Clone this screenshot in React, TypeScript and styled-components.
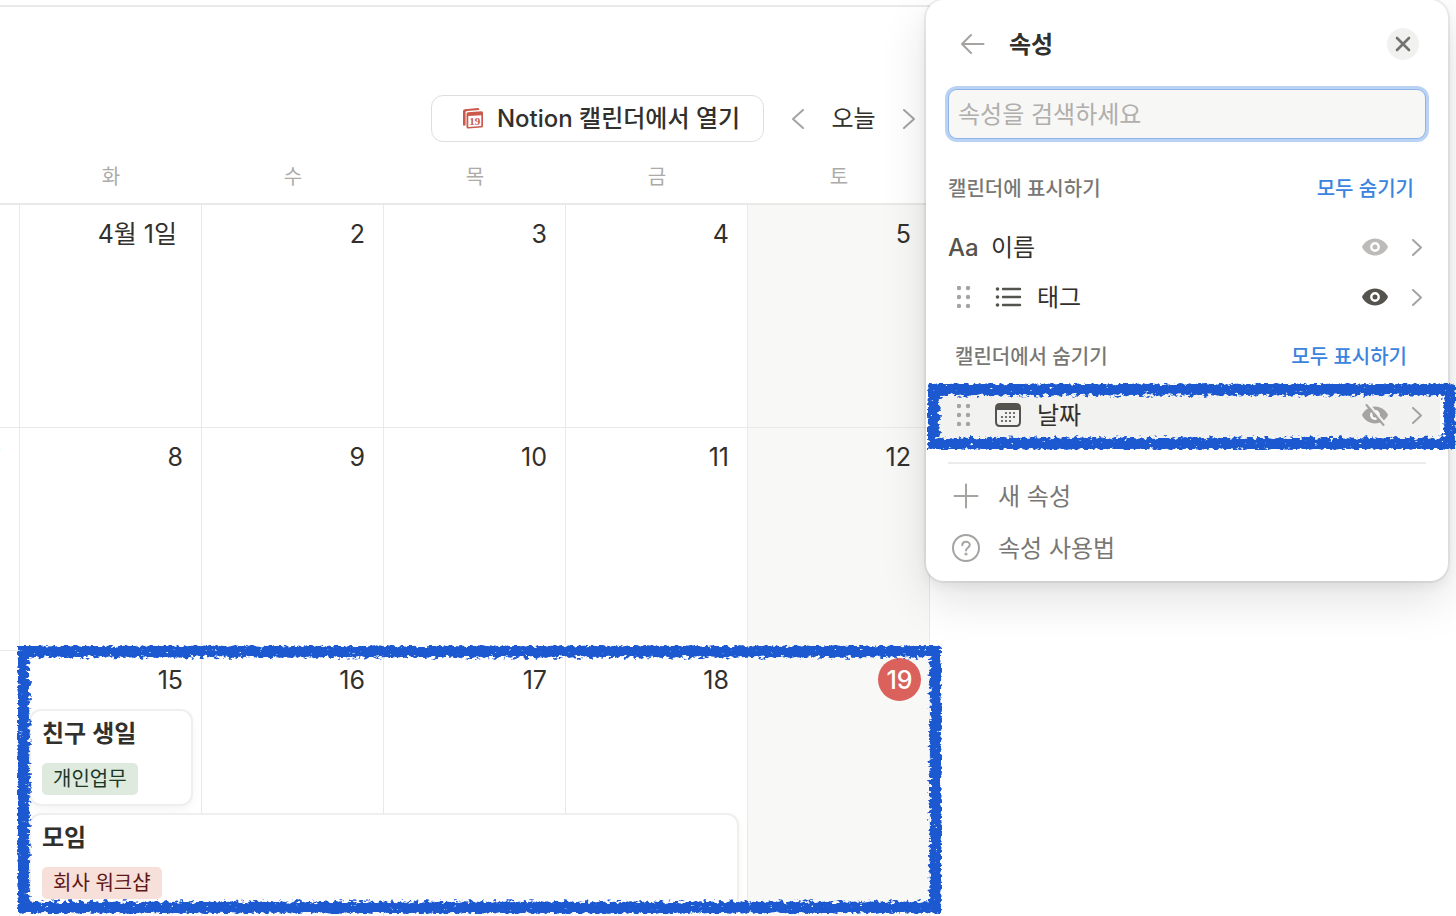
import React from "react";
import styled, { createGlobalStyle, css } from "styled-components";

const Global = createGlobalStyle`
  *, *::before, *::after { box-sizing: border-box; }
  body { margin: 0; background: #fff; color: #32302c; overflow: hidden; }
  body, button, input { font-family: Inter, "Noto Sans CJK KR", sans-serif; }
  button { border: 0; padding: 0; margin: 0; background: none; color: inherit; cursor: pointer; }
`;

const Page = styled.div`
  position: relative;
  height: 100vh;
  overflow: hidden;
  padding-top: 5px;
`;

const Calendar = styled.main`
  margin-right: 526px;
  border-top: 2px solid #e9e9e7;
  padding-top: 88px;
`;

const Toolbar = styled.div`
  display: flex;
  justify-content: flex-end;
  align-items: center;
  height: 47px;
  padding-right: 11px;
`;

const OpenButton = styled.button`
  display: flex;
  align-items: center;
  justify-content: center;
  gap: 14px;
  width: 333px;
  height: 47px;
  margin-right: 24px;
  padding-left: 8px;
  border: 1px solid #dededc;
  border-radius: 12px;
  font-size: 24px;
  font-weight: 500;
  white-space: nowrap;
`;

/* Hangul glyphs sit low in their line box; the bottom padding centres them. */
const Label = styled.span`
  padding-bottom: 4px;
`;

const NavButton = styled.button`
  display: flex;
  width: 20px;
  justify-content: center;
`;

const TodayButton = styled.button`
  width: 91px;
  padding-bottom: 4px;
  font-size: 24px;
`;

const columns = css`
  display: grid;
  grid-template-columns: 20px repeat(5, minmax(0, 1fr));
`;

const WeekdayRow = styled.div`
  ${columns}
  height: 63px;
  border-bottom: 2px solid #e9e9e7;
`;

const Weekday = styled.div`
  padding-top: 21px;
  font-size: 20px;
  line-height: 28px;
  text-align: center;
  color: #acaba9;
`;

const Week = styled.div<{ $last?: boolean }>`
  position: relative;
  ${columns}
  height: ${(p) => (p.$last ? "270px" : "223px")};
`;

const Day = styled.div<{ $weekend?: boolean }>`
  display: flex;
  justify-content: flex-end;
  align-items: flex-start;
  padding: 7px 8px 0 0;
  overflow: hidden;
  border-right: 1px solid #e9e9e7;
  border-bottom: 1px solid #e9e9e7;
  background: ${(p) => (p.$weekend ? "#f8f8f7" : "#fff")};
`;

const DayNumber = styled.span<{ $today?: boolean; $wide?: boolean }>`
  display: flex;
  align-items: center;
  justify-content: flex-end;
  height: 43px;
  padding: ${(p) => (p.$wide ? "0 16px 3px 0" : "1px 10px 0 0")};
  font-size: 25px;
  white-space: nowrap;
  ${(p) =>
    p.$today &&
    css`
      width: 43px;
      padding: 1px 0 0;
      justify-content: center;
      border-radius: 50%;
      background: #db615c;
      color: #fff;
      font-weight: 500;
    `}
`;

const Events = styled.div`
  position: absolute;
  inset: 60px 0 auto 0;
  ${columns}
  row-gap: 11px;
`;

const EventCard = styled.article<{ $span: number }>`
  grid-column: 2 / span ${(p) => p.$span};
  height: 93px;
  margin: 0 11px;
  padding: 5px 11px;
  border-radius: 10px;
  background: #fff;
  box-shadow: 0 0 0 2px #efefee, 0 4px 12px rgba(15, 15, 15, 0.06);
`;

const EventTitle = styled.h3`
  margin: 0 0 11px;
  font-size: 24px;
  font-weight: 600;
  line-height: 36px;
`;

const Tag = styled.span<{ $tone: "green" | "red" }>`
  display: block;
  width: fit-content;
  padding: 0 11px;
  border-radius: 5px;
  font-size: 20px;
  line-height: 32px;
  background: ${(p) => (p.$tone === "green" ? "#deeade" : "#f7dfda")};
  color: ${(p) => (p.$tone === "green" ? "#1c3829" : "#5d1715")};
`;

const Panel = styled.aside`
  position: absolute;
  top: 0;
  right: 8px;
  width: 522px;
  padding: 22px 0 7px;
  border-radius: 18px;
  background: #fff;
  box-shadow: 0 0 0 2px rgba(15, 15, 15, 0.06), 0 6px 12px rgba(15, 15, 15, 0.06),
    0 18px 48px rgba(15, 15, 15, 0.12);
`;

const PanelHeader = styled.header`
  display: flex;
  align-items: center;
  height: 44px;
  padding: 0 29px 0 34px;
`;

const BackButton = styled.button`
  display: flex;
`;

const PanelTitle = styled.h2`
  flex: 1;
  margin: 0 0 0 24px;
  padding-bottom: 4px;
  font-size: 24px;
  font-weight: 600;
`;

const CloseButton = styled.button`
  display: grid;
  place-items: center;
  width: 32px;
  height: 32px;
  border-radius: 50%;
  background: #f1f1f0;
`;

const SearchInput = styled.input`
  display: block;
  width: calc(100% - 46px);
  height: 48px;
  margin: 24px 23px 0;
  padding: 0 9px;
  border: 0;
  border-radius: 8px;
  outline: 0;
  background: #f7f7f5;
  box-shadow: 0 0 0 1px #8fb5e8, 0 0 0 4px #bad3f4;
  font-size: 24px;
  &::placeholder { color: #b0afad; opacity: 1; }
`;

const SectionHead = styled.div<{ $inset?: boolean }>`
  display: flex;
  justify-content: space-between;
  align-items: center;
  height: 36px;
  padding: ${(p) => (p.$inset ? "0 41px 0 29px" : "0 34px 0 22px")};
  margin-top: ${(p) => (p.$inset ? "15px" : "31px")};
  font-size: 20px;
  font-weight: 500;
  color: #787774;
`;

const LinkButton = styled.button`
  font-size: 20px;
  font-weight: 500;
  color: #3a84de;
`;

const Properties = styled.ul`
  list-style: none;
  margin: 0;
  padding: 17px 0 0;
`;

const PropertyRow = styled.li<{ $active?: boolean }>`
  position: relative;
  display: flex;
  align-items: center;
  height: 50px;
  margin: 0 8px 0 8px;
  padding: 0 18px 0 14px;
  border-radius: 8px;
  background: ${(p) => (p.$active ? "#f2f2f1" : "transparent")};
`;

const Grip = styled.button`
  display: flex;
  width: 32px;
  margin-right: 15px;
  padding-left: 9px;
`;

const Glyph = styled.span<{ $text?: boolean }>`
  display: flex;
  width: ${(p) => (p.$text ? "30px" : "28px")};
  margin-right: ${(p) => (p.$text ? "13px" : "14px")};
  font-size: 24px;
  font-weight: 500;
  color: #55534e;
`;

const PropertyName = styled.span`
  flex: 1;
  padding-bottom: 4px;
  font-size: 24px;
`;

const IconButton = styled.button`
  display: flex;
  margin-left: 23px;
`;

const Divider = styled.hr`
  height: 2px;
  margin: 22px 22px 6px;
  border: 0;
  background: #ebebea;
`;

const Action = styled.button`
  display: flex;
  align-items: center;
  gap: 18px;
  width: 100%;
  height: 52px;
  padding-left: 26px;
  font-size: 24px;
  color: #787774;
`;

const Marker = styled.div<{ $bleed: string }>`
  position: absolute;
  inset: ${(p) => p.$bleed};
  pointer-events: none;
  z-index: 2;
`;

const MarkerDrawing = styled.svg`
  display: block;
  width: 100%;
  height: 100%;
  overflow: visible;
`;

const OuterLine = styled.rect`
  x: -1px;
  y: -1px;
  width: calc(100% + 2px);
  height: calc(100% + 2px);
  fill: none;
  stroke: #1c59d1;
  stroke-width: 10px;
`;

const InnerFray = styled.rect`
  x: 5px;
  y: 5px;
  width: calc(100% - 10px);
  height: calc(100% - 10px);
  fill: none;
  stroke: rgba(28, 89, 209, 0.4);
  stroke-width: 3px;
`;

/* Crayon-like outline: a soft stroke broken up by noise, cut at a threshold and kept near the line. */
function Crayon({ id, bleed, seed }: { id: string; bleed: string; seed: number }) {
  return (
    <Marker $bleed={bleed} aria-hidden="true">
      <MarkerDrawing>
        <filter
          id={id}
          x="-10"
          y="-10"
          width="110%"
          height="140%"
          filterUnits="userSpaceOnUse"
          primitiveUnits="userSpaceOnUse"
          colorInterpolationFilters="sRGB"
        >
          <feMorphology in="SourceAlpha" operator="dilate" radius="1" result="near" />
          <feComponentTransfer in="near" result="nearSolid">
            <feFuncA type="linear" slope="4" />
          </feComponentTransfer>
          <feGaussianBlur in="SourceAlpha" stdDeviation="1.2" result="soft" />
          <feTurbulence type="fractalNoise" baseFrequency="0.2 0.32" numOctaves="3" seed={seed} />
          <feColorMatrix values="0 0 0 0 0  0 0 0 0 0  0 0 0 0 0  1 0 0 0 0" result="noise" />
          <feComposite in="soft" in2="noise" operator="arithmetic" k2="1" k3="1.9" k4="-0.9" result="mixed" />
          <feComponentTransfer in="mixed" result="cut">
            <feFuncA type="linear" slope="5" intercept="-1.9" />
          </feComponentTransfer>
          <feComposite in="cut" in2="nearSolid" operator="in" />
          <feColorMatrix values="0 0 0 0 0.11  0 0 0 0 0.35  0 0 0 0 0.82  0 0 0 1 0" />
        </filter>
        <g filter={`url(#${id})`}>
          <OuterLine />
          <InnerFray />
        </g>
      </MarkerDrawing>
    </Marker>
  );
}

const Chevron = ({ left }: { left?: boolean }) => (
  <svg width="12" height="20" viewBox="0 0 12 20" fill="none" stroke="#a5a4a1" strokeWidth="2" strokeLinecap="round" strokeLinejoin="round">
    <path d={left ? "M11 1 1 10l10 9" : "M1 1l10 9-10 9"} />
  </svg>
);

const RowChevron = () => (
  <svg width="10" height="17" viewBox="0 0 10 17" fill="none" stroke="#a5a4a1" strokeWidth="2" strokeLinecap="round" strokeLinejoin="round">
    <path d="M1 1l8 7.5L1 16" />
  </svg>
);

const CalendarLogo = () => (
  <svg width="20" height="21" viewBox="0 0 20 21">
    <path d="M0 17.500V3.300Q0 1.400 1.800 1.200L15 0Q16.300 0 16.300 1.500V2L4 3Q2.600 3.200 2.600 4.600V17.500Z" fill="#cb5a4c" />
    <path d="M5 4.300 18.500 3.300Q20 3.200 20 4.800V18Q20 19.500 18.500 19.600L5.200 20.500Q3.500 20.600 3.500 19V6Q3.500 4.400 5 4.300Z" fill="#cb5a4c" />
    <path d="M5.300 8 18.300 7.200V18L5.300 18.900Z" fill="#fff" />
    <text x="11.800" y="17" textAnchor="middle" fontSize="11" fontWeight="700" fontFamily="Liberation Serif, serif" fill="#cb5a4c">19</text>
  </svg>
);

const Eye = ({ color, off }: { color: string; off?: boolean }) => (
  <svg width="28" height="22" viewBox="0 0 28 22">
    <path d="M1 11C3 6.500 8 2.500 14 2.500S25 6.500 27 11C25 15.500 20 19.500 14 19.500S3 15.500 1 11Z" fill={color} />
    <circle cx="14" cy="11" r="3.700" fill={color} stroke="#fff" strokeWidth="2.400" />
    {off && (
      <>
        <path d="M7.500 0 24.500 20" stroke="#f2f2f1" strokeWidth="2.200" />
        <path d="M5.500 1 22.500 21" stroke={color} strokeWidth="2" strokeLinecap="round" />
      </>
    )}
  </svg>
);

const Dots = () => (
  <svg width="14" height="22" viewBox="0 0 14 22" fill="#a5a4a1">
    {[2, 11].map((x) => [2, 11, 20].map((y) => <circle key={`${x}-${y}`} cx={x} cy={y} r="2.200" />))}
  </svg>
);

const ListIcon = () => (
  <svg width="27" height="20" viewBox="0 0 27 20" stroke="#55534e" strokeWidth="2.400" strokeLinecap="round">
    {[2, 10, 18].map((y) => (
      <g key={y}>
        <path d={`M8 ${y}H25`} />
        <circle cx="2.500" cy={y} r="1.800" fill="#55534e" stroke="none" />
      </g>
    ))}
  </svg>
);

const DateIcon = () => (
  <svg width="26" height="24" viewBox="0 0 26 24" fill="#55534e">
    <path fillRule="evenodd" d="M5 0H21Q26 0 26 5V19Q26 24 21 24H5Q0 24 0 19V5Q0 0 5 0ZM2 7V19Q2 22 5 22H21Q24 22 24 19V7Z" />
    {[[11, 10], [15, 10], [19, 10], [7, 14], [11, 14], [15, 14], [19, 14], [7, 18], [11, 18], [15, 18]].map(([x, y]) => (
      <circle key={`${x}-${y}`} cx={x} cy={y} r="1.100" />
    ))}
  </svg>
);

const weeks = [
  ["", "4월 1일", "2", "3", "4", "5"],
  ["7", "8", "9", "10", "11", "12"],
  ["14", "15", "16", "17", "18", "19"],
];

export default function App() {
  return (
    <>
      <Global />
      <Page>
        <Calendar>
          <Toolbar>
            <OpenButton>
              <CalendarLogo />
              <Label>Notion 캘린더에서 열기</Label>
            </OpenButton>
            <NavButton aria-label="이전"><Chevron left /></NavButton>
            <TodayButton>오늘</TodayButton>
            <NavButton aria-label="다음"><Chevron /></NavButton>
          </Toolbar>
          <WeekdayRow>
            {["", "화", "수", "목", "금", "토"].map((d, i) => <Weekday key={i}>{d}</Weekday>)}
          </WeekdayRow>
          {weeks.map((days, w) => (
            <Week key={w} $last={w === 2}>
              {days.map((d, i) => (
                <Day key={i} $weekend={i === 5}>
                  <DayNumber $today={d === "19"} $wide={d.includes("월")}>{d}</DayNumber>
                </Day>
              ))}
              {w === 2 && (
                <>
                  <Events>
                    <EventCard $span={1}>
                      <EventTitle>친구 생일</EventTitle>
                      <Tag $tone="green">개인업무</Tag>
                    </EventCard>
                    <EventCard $span={4}>
                      <EventTitle>모임</EventTitle>
                      <Tag $tone="red">회사 워크샵</Tag>
                    </EventCard>
                  </Events>
                  <Crayon id="crayon-week" seed={4} bleed="1px -5px 14px 24px" />
                </>
              )}
            </Week>
          ))}
        </Calendar>

        <Panel>
          <PanelHeader>
            <BackButton aria-label="뒤로">
              <svg width="25" height="20" viewBox="0 0 25 20" fill="none" stroke="#a5a4a1" strokeWidth="2" strokeLinecap="round" strokeLinejoin="round">
                <path d="M23.500 10H2M11 1 2 10l9 9" />
              </svg>
            </BackButton>
            <PanelTitle>속성</PanelTitle>
            <CloseButton aria-label="닫기">
              <svg width="16" height="16" viewBox="0 0 16 16" stroke="#73726e" strokeWidth="2.600" strokeLinecap="round">
                <path d="M2 2l12 12M14 2 2 14" />
              </svg>
            </CloseButton>
          </PanelHeader>
          <SearchInput aria-label="속성 검색" placeholder="속성을 검색하세요" />
          <SectionHead>캘린더에 표시하기<LinkButton>모두 숨기기</LinkButton></SectionHead>
          <Properties>
            <PropertyRow>
              <Glyph $text>Aa</Glyph>
              <PropertyName>이름</PropertyName>
              <IconButton aria-label="숨기기"><Eye color="#bcbbb9" /></IconButton>
              <IconButton aria-label="이름 편집"><RowChevron /></IconButton>
            </PropertyRow>
            <PropertyRow>
              <Grip aria-label="태그 이동"><Dots /></Grip>
              <Glyph><ListIcon /></Glyph>
              <PropertyName>태그</PropertyName>
              <IconButton aria-label="숨기기"><Eye color="#55534e" /></IconButton>
              <IconButton aria-label="태그 편집"><RowChevron /></IconButton>
            </PropertyRow>
          </Properties>
          <SectionHead $inset>캘린더에서 숨기기<LinkButton>모두 표시하기</LinkButton></SectionHead>
          <Properties>
            <PropertyRow $active>
              <Grip aria-label="날짜 이동"><Dots /></Grip>
              <Glyph><DateIcon /></Glyph>
              <PropertyName>날짜</PropertyName>
              <IconButton aria-label="표시하기"><Eye color="#a5a4a1" off /></IconButton>
              <IconButton aria-label="날짜 편집"><RowChevron /></IconButton>
              <Crayon id="crayon-row" seed={9} bleed="0 -9px -3px 0" />
            </PropertyRow>
          </Properties>
          <Divider />
          <Action>
            <svg width="28" height="28" viewBox="0 0 28 28" stroke="#a5a4a1" strokeWidth="2" strokeLinecap="round"><path d="M14 2.500v23M2.500 14h23" /></svg>
            <Label>새 속성</Label>
          </Action>
          <Action>
            <svg width="28" height="28" viewBox="0 0 28 28" fill="none" stroke="#a5a4a1" strokeWidth="2" strokeLinecap="round">
              <circle cx="14" cy="14" r="13" />
              <path d="M10.300 11.300c0-2 1.600-3.500 3.700-3.500s3.800 1.400 3.800 3.300c0 2.600-3.800 2.700-3.800 5.300" />
              <circle cx="14" cy="20" r=".6" />
            </svg>
            <Label>속성 사용법</Label>
          </Action>
        </Panel>
      </Page>
    </>
  );
}
